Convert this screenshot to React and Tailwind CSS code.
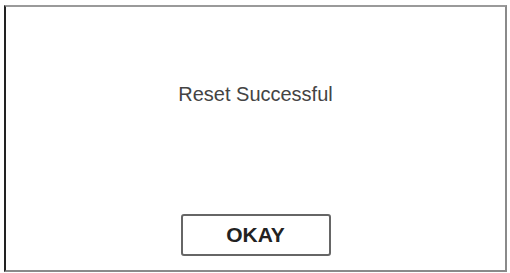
export default function App() {
  return (
    <div className="w-[510px] h-[273px] bg-white pt-[5px] pl-[4px] pr-[3px] pb-[1px]" style={{ fontFamily: '"Liberation Sans", Arial, sans-serif' }}>
      <div className="h-full flex flex-col items-center border-2 border-[#8a8a8a] border-t-[#9a9a9a] border-l-[#222]">
        <div className="mt-[75px] text-[20px] leading-[24px] text-[#444]">Reset Successful</div>
        <button className="mt-auto mb-[14px] w-[150px] h-[42px] flex items-center justify-center border-2 border-[#666] rounded-[3px] text-[21px] font-bold text-[#222]">
          OKAY
        </button>
      </div>
    </div>
  );
}
